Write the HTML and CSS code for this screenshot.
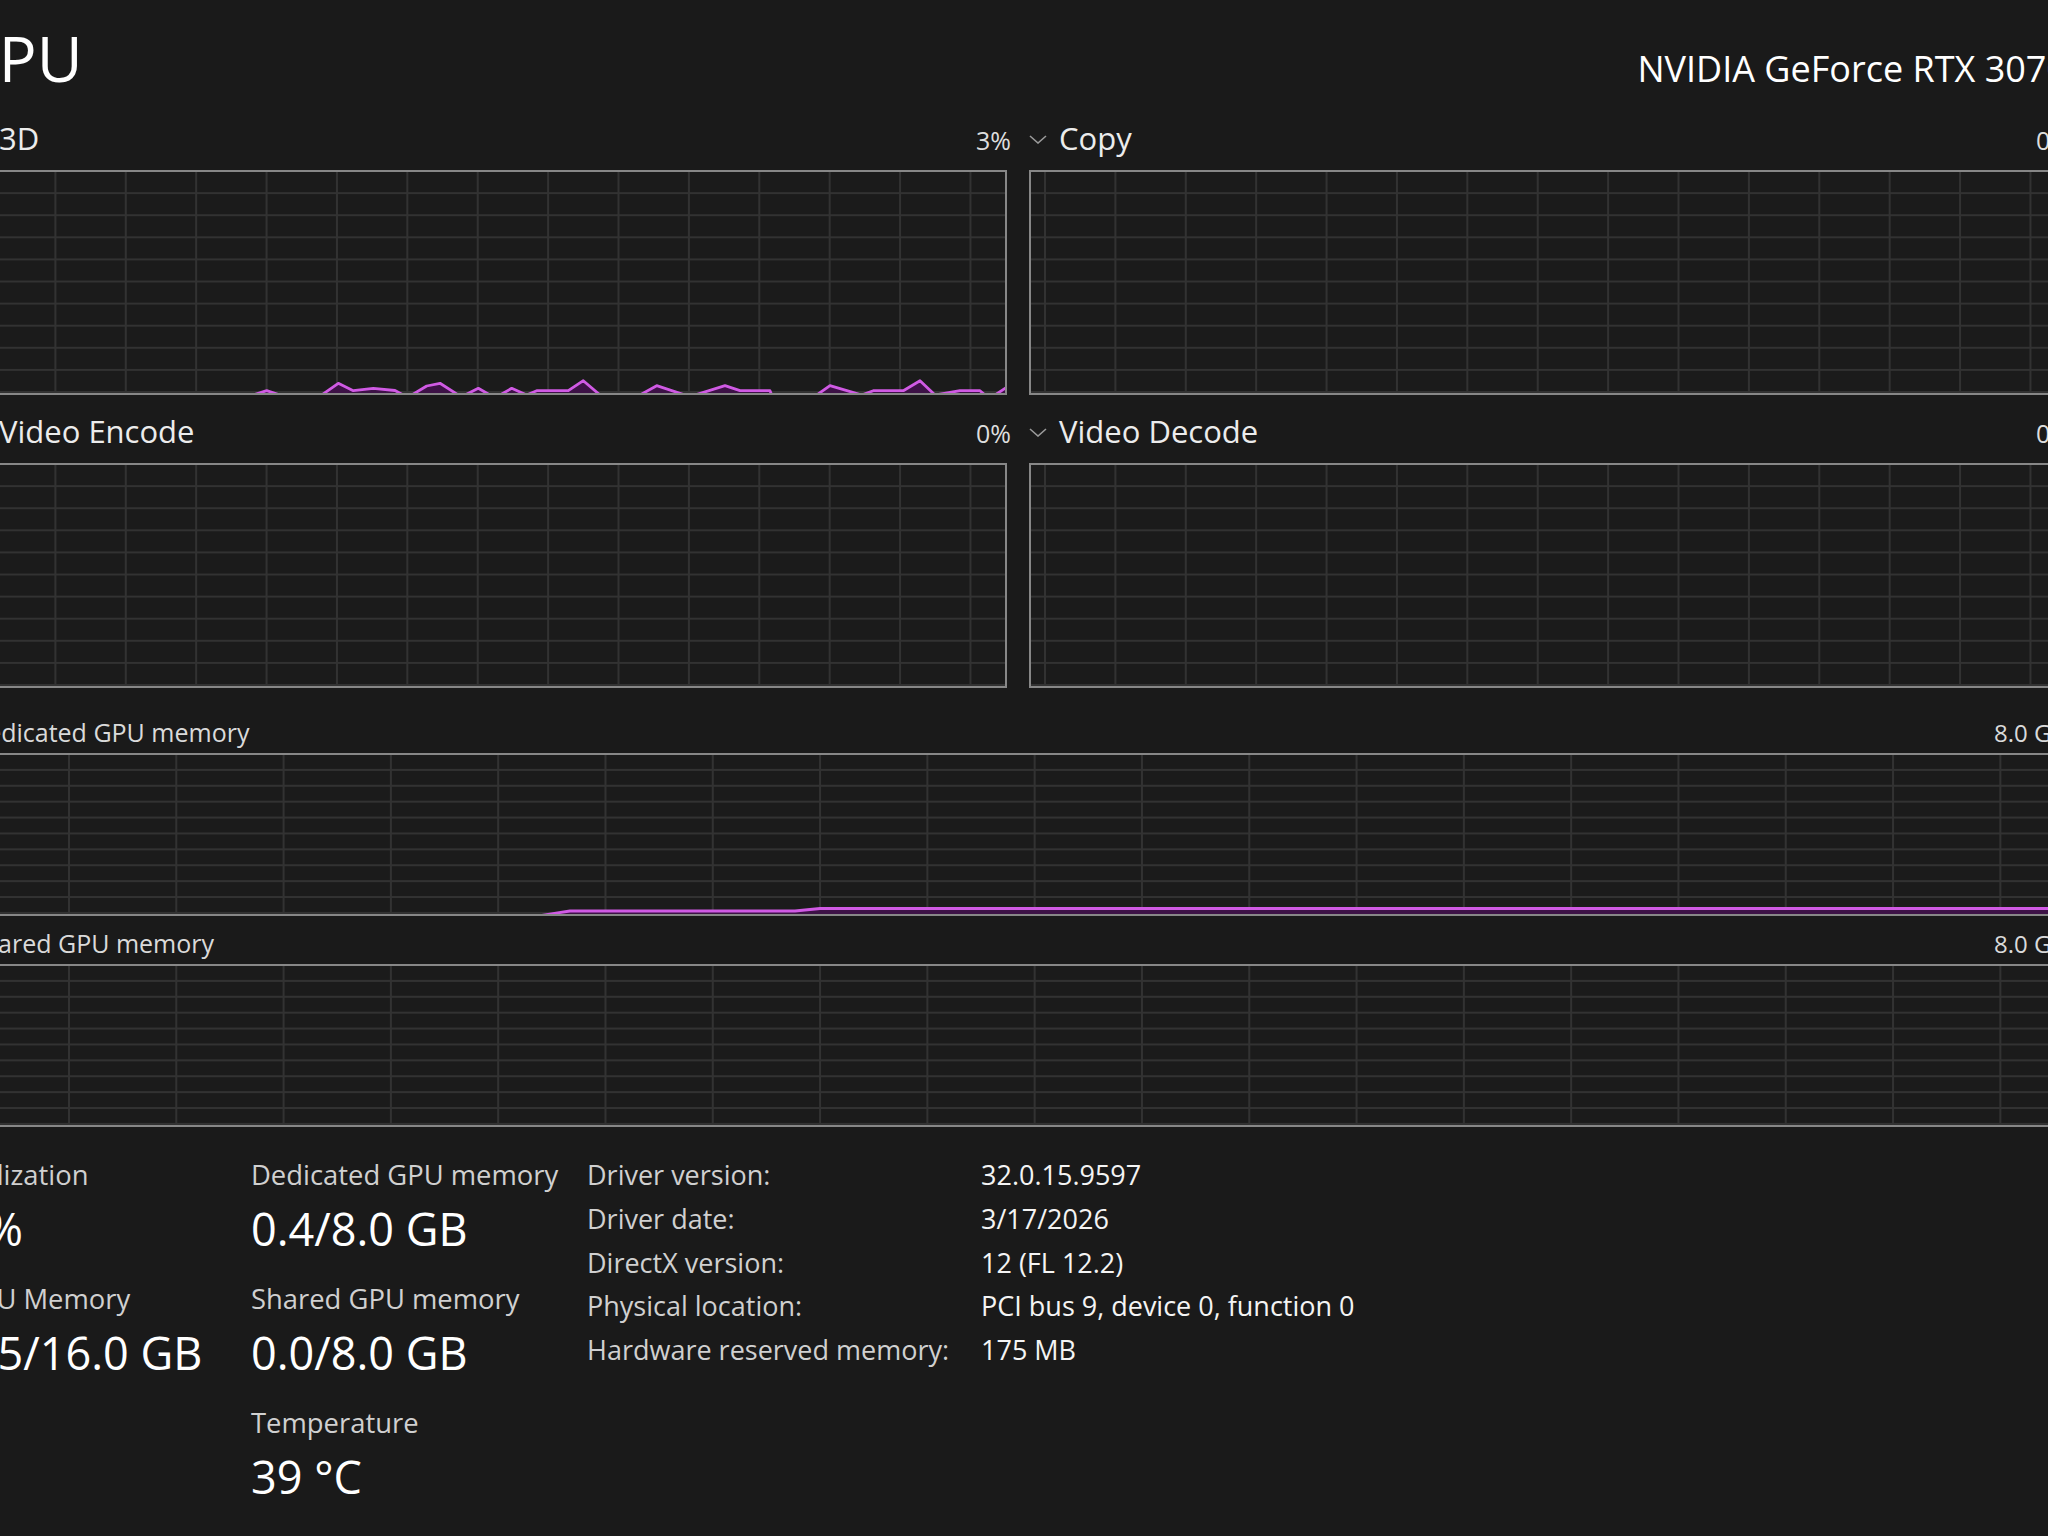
FILE: index.html
```html
<!DOCTYPE html>
<html>
	<head>
		<meta charset="UTF-8">
		<title>GPU</title>
		<link rel="stylesheet" href="styles.css">
	</head>
	<body>
		<div class="perf">
			<div class="head">
				<h1 class="title">GPU</h1>
				<div class="model">NVIDIA GeForce RTX 3070</div>
			</div>

			<div class="engines">
				<div class="engine">
					<div class="engine-head">
						<span class="engine-name"><svg class="chev" viewBox="0 0 18 9"><polyline points="1,1 9,8 17,1"/></svg>3D</span>
						<span class="engine-pct">3%</span>
					</div>
					<div class="chart">
						<svg class="series" viewBox="0 0 1034 221" preserveAspectRatio="none">
							<polygon class="fill" points="249,223 282,223 295.7,218.7 309,223 350.7,223 367.3,211.3 382.3,218.7 402.3,216.3 424,218.5 432.3,223 440.7,223 455.7,214 469,211.3 487.3,223 494,223 507.3,216.3 519,223 529,223 540.7,216.3 555.7,223 565.7,218.7 597.3,218.7 612.3,208.7 629,223 669,223 685.7,213.7 714,223 724,223 754,213.7 769,218.7 799,218.7 800.7,223 845.7,223 859,213.7 890.7,223 902.3,218.7 932.3,218.7 949,208.7 964,223 989,218.7 1009,218.7 1014,223 1024,223 1036,215 1036,223"/>
							<polyline class="line" points="249,223 282,223 295.7,218.7 309,223 350.7,223 367.3,211.3 382.3,218.7 402.3,216.3 424,218.5 432.3,223 440.7,223 455.7,214 469,211.3 487.3,223 494,223 507.3,216.3 519,223 529,223 540.7,216.3 555.7,223 565.7,218.7 597.3,218.7 612.3,208.7 629,223 669,223 685.7,213.7 714,223 724,223 754,213.7 769,218.7 799,218.7 800.7,223 845.7,223 859,213.7 890.7,223 902.3,218.7 932.3,218.7 949,208.7 964,223 989,218.7 1009,218.7 1014,223 1024,223 1036,215"/>
						</svg>
					</div>
				</div>
				<div class="engine">
					<div class="engine-head">
						<span class="engine-name"><svg class="chev" viewBox="0 0 18 9"><polyline points="1,1 9,8 17,1"/></svg>Copy</span>
						<span class="engine-pct">0%</span>
					</div>
					<div class="chart"></div>
				</div>
				<div class="engine">
					<div class="engine-head">
						<span class="engine-name"><svg class="chev" viewBox="0 0 18 9"><polyline points="1,1 9,8 17,1"/></svg>Video Encode</span>
						<span class="engine-pct">0%</span>
					</div>
					<div class="chart"></div>
				</div>
				<div class="engine">
					<div class="engine-head">
						<span class="engine-name"><svg class="chev" viewBox="0 0 18 9"><polyline points="1,1 9,8 17,1"/></svg>Video Decode</span>
						<span class="engine-pct">0%</span>
					</div>
					<div class="chart"></div>
				</div>
			</div>

			<div class="mem">
				<div class="mem-head"><span>Dedicated GPU memory</span><span>8.0 GB</span></div>
				<div class="chart">
					<svg class="series" viewBox="0 0 2094 159" preserveAspectRatio="none">
						<polygon class="fill" points="0,161 567,161 599,156 824,156 849,153.5 2094,153.5 2094,161"/>
						<polyline class="line" points="0,161 567,161 599,156 824,156 849,153.5 2094,153.5"/>
					</svg>
				</div>
			</div>
			<div class="mem">
				<div class="mem-head"><span>Shared GPU memory</span><span>8.0 GB</span></div>
				<div class="chart"></div>
			</div>

			<div class="stats">
				<div class="stat-col c1">
					<div class="stat">
						<div class="stat-label">Utilization</div>
						<div class="stat-value">3%</div>
					</div>
					<div class="stat">
						<div class="stat-label">GPU Memory</div>
						<div class="stat-value">0.5/16.0 GB</div>
					</div>
				</div>
				<div class="stat-col c2">
					<div class="stat">
						<div class="stat-label">Dedicated GPU memory</div>
						<div class="stat-value">0.4/8.0 GB</div>
					</div>
					<div class="stat">
						<div class="stat-label">Shared GPU memory</div>
						<div class="stat-value">0.0/8.0 GB</div>
					</div>
					<div class="stat">
						<div class="stat-label">Temperature</div>
						<div class="stat-value">39 °C</div>
					</div>
				</div>
				<dl class="details">
					<dt>Driver version:</dt><dd>32.0.15.9597</dd>
					<dt>Driver date:</dt><dd>3/17/2026</dd>
					<dt>DirectX version:</dt><dd>12 (FL 12.2)</dd>
					<dt>Physical location:</dt><dd>PCI bus 9, device 0, function 0</dd>
					<dt>Hardware reserved memory:</dt><dd>175 MB</dd>
				</dl>
			</div>
		</div>
	</body>
</html>
```

FILE: styles.css
```css
* {
	margin: 0;
	padding: 0;
	box-sizing: border-box;
}

html,
body {
	background: #1a1a1a;
}

body {
	overflow: hidden;
	font-family: "Open Sans", "Noto Sans", "Liberation Sans", sans-serif;
	color: #e8e8e8;
}

/* page is cropped: content starts left of the window */
.perf {
	width: 2098px;
	margin-left: -31px;
	padding-top: 23px;
}

.head {
	display: flex;
	justify-content: space-between;
	align-items: baseline;
	height: 70px;
}

.title {
	font-size: 63px;
	font-weight: 400;
	line-height: 70px;
	margin-left: -16px;
	color: #fff;
}

.model {
	font-size: 36px;
	line-height: 70px;
	color: #fff;
}

.engines {
	display: grid;
	grid-template-columns: 1fr 1fr;
	column-gap: 22px;
	row-gap: 17px;
	margin-top: 26px;
}

.engine-head {
	display: flex;
	justify-content: space-between;
	align-items: baseline;
	height: 36px;
	margin-bottom: 15px;
	padding-top: 1px;
}

.engine-name {
	font-size: 31px;
	line-height: 36px;
	color: #ececec;
}

.chev {
	width: 18px;
	height: 9px;
	margin-right: 12px;
	vertical-align: 6px;
	fill: none;
	stroke: #9a9a9a;
	stroke-width: 1.6;
}

.engine-pct {
	font-size: 25px;
	line-height: 36px;
	margin-right: -4px;
	color: #dedede;
}

.chart {
	border: 2px solid #878787;
	background-color: #1b1b1b;
	overflow: hidden;
}

.engine .chart {
	height: 225px;
	background-image:
		linear-gradient(to right, #323232 0, #323232 2px, transparent 2px),
		linear-gradient(to top, #323232 0, #323232 2px, transparent 2px);
	background-size: 70.4px 100%, 100% 10%;
	background-position: 13px 0, 0 0;
}

.mem {
	margin-top: 30px;
}

.mem + .mem {
	margin-top: 13px;
}

.mem-head {
	display: flex;
	justify-content: space-between;
	align-items: baseline;
	height: 28px;
	margin-bottom: 7px;
	font-size: 25px;
	line-height: 28px;
	color: #dadada;
}

.mem-head span + span {
	font-size: 24px;
}

.mem .chart {
	height: 163px;
	background-image:
		linear-gradient(to right, #323232 0, #323232 2px, transparent 2px),
		linear-gradient(to top, #323232 0, #323232 2px, transparent 2px);
	background-size: 107.3px 100%, 100% 10%;
	background-position: 97px 0, 0 0;
}

.series {
	display: block;
	width: 100%;
	height: 100%;
}

.series .fill {
	fill: #3d1246;
}

.series .line {
	fill: none;
	stroke: #d05ae4;
	stroke-width: 2.8;
	stroke-linejoin: round;
}

.stats {
	display: flex;
	align-items: flex-start;
	margin-top: 31px;
	margin-left: -9px;
}

.stat-col {
	display: flex;
	flex-direction: column;
	gap: 27px;
}

.stat-col.c1 {
	width: 291px;
}

.stat-col.c2 {
	width: 336px;
}

.stat-label {
	font-size: 27.4px;
	line-height: 34px;
	color: #d0d0d0;
}

.stat-value {
	font-size: 45px;
	line-height: 52px;
	margin-top: 11px;
	color: #fff;
}

.details {
	display: grid;
	grid-template-columns: 394px auto;
	align-content: start;
	row-gap: 9.75px;
	font-size: 27px;
	line-height: 34px;
}

.details dt {
	color: #d0d0d0;
}

.details dd {
	color: #f4f4f4;
}
```
